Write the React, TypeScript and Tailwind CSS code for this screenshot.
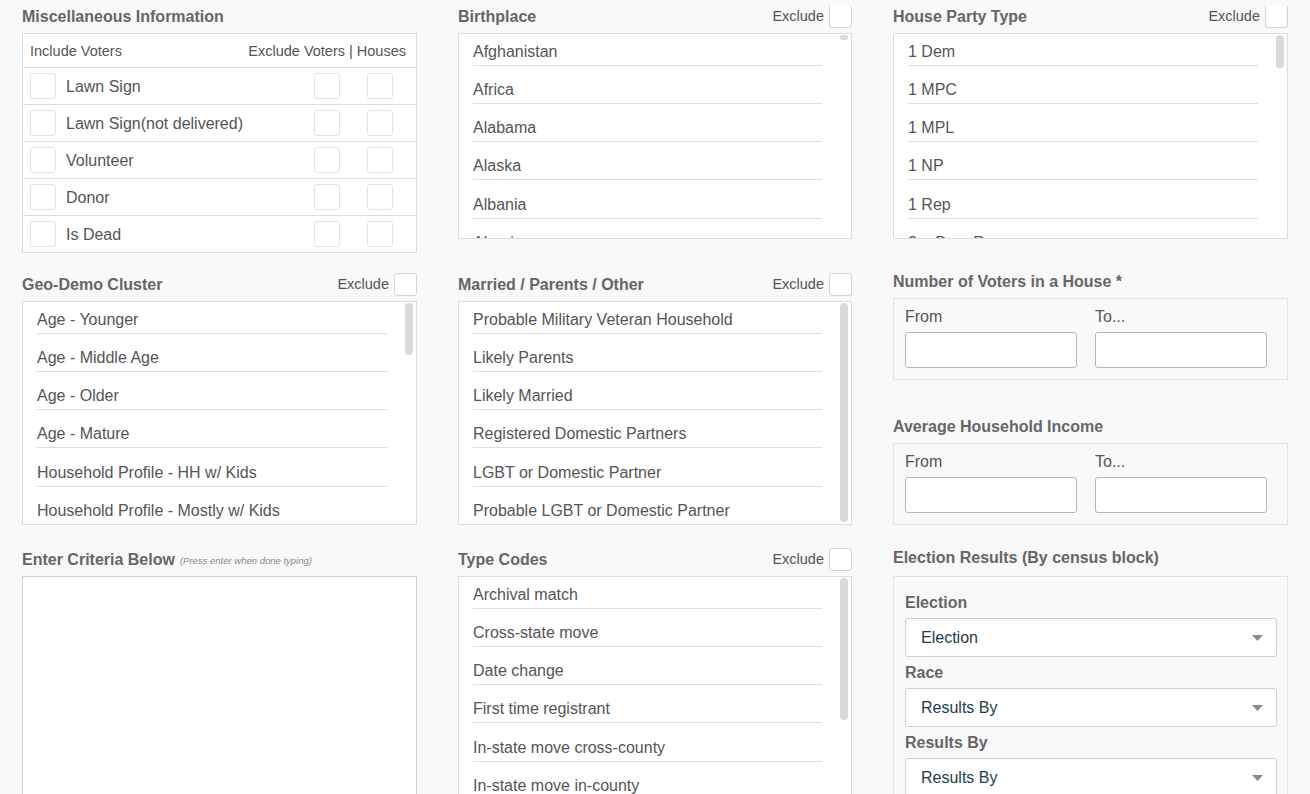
import React from 'react';

type ListProps = {
    items: string[];
    height: number;
    thumbHeight: number;
};

const font = { fontFamily: '"Liberation Sans", Arial, Helvetica, sans-serif' };

function ExcludeBox({ cut }: { cut?: boolean }) {
    return (
        <div className="flex items-center gap-[5px]">
            <span className="pt-[2px] text-[14.5px] text-[#555]">Exclude</span>
            <span
                className={
                    cut
                        ? 'block w-[23px] h-[23px] bg-white border border-[#d4d4d4] border-t-transparent rounded-[3px]'
                        : 'block w-[23px] h-[23px] bg-white border border-[#d4d4d4] rounded-[3px]'
                }
            />
        </div>
    );
}

function Header({ title, exclude, cut }: { title: string; exclude?: boolean; cut?: boolean }) {
    return (
        <div className="h-[24px] flex items-center justify-between">
            <h3 className="pt-[2px] text-[16px] font-bold text-[#666]">{title}</h3>
            {exclude && <ExcludeBox cut={cut} />}
        </div>
    );
}

function ListBox({ items, height, thumbHeight }: ListProps) {
    return (
        <div
            className="relative mt-[5px] bg-white border border-[#dcdcdc] overflow-hidden"
            style={{ height }}
        >
            <ul className="pl-[14px] pr-[29px]">
                {items.map((item, i) => (
                    <li
                        key={item}
                        className={
                            i === 0
                                ? 'pt-[7.5px] pb-[3px] text-[16px] leading-[20px] text-[#555] border-b border-[#dcdcdc] whitespace-nowrap'
                                : 'pt-[14.3px] pb-[3px] text-[16px] leading-[20px] text-[#555] border-b border-[#dcdcdc] whitespace-nowrap'
                        }
                    >
                        {item}
                    </li>
                ))}
            </ul>
            <div
                className="absolute top-[1px] right-[3px] w-[8px] rounded-full bg-[#d9d9d9]"
                style={{ height: thumbHeight }}
            />
        </div>
    );
}

const miscRows = ['Lawn Sign', 'Lawn Sign(not delivered)', 'Volunteer', 'Donor', 'Is Dead'];

function MiscInfo() {
    return (
        <div>
            <Header title="Miscellaneous Information" />
            <div className="mt-[5px] bg-white border border-[#dcdcdc]">
                <div className="h-[34px] pt-[2px] pl-[7px] pr-[10px] flex items-center justify-between text-[14.5px] text-[#555] border-b border-[#dcdcdc]">
                    <span>Include Voters</span>
                    <span>Exclude Voters | Houses</span>
                </div>
                {miscRows.map((row, i) => (
                    <div
                        key={row}
                        className={
                            i < miscRows.length - 1
                                ? 'h-[37px] pl-[7px] pr-[23px] flex items-center border-b border-[#dcdcdc]'
                                : 'h-[36px] pl-[7px] pr-[23px] flex items-center'
                        }
                    >
                        <span className="block w-[26px] h-[26px] bg-white border border-[#e2e2e2] rounded-[3px]" />
                        <span className="ml-[10px] pt-[1px] flex-1 text-[16px] text-[#555]">{row}</span>
                        <span className="block w-[26px] h-[26px] bg-white border border-[#e2e2e2] rounded-[3px]" />
                        <span className="ml-[27px] block w-[26px] h-[26px] bg-white border border-[#e2e2e2] rounded-[3px]" />
                    </div>
                ))}
            </div>
        </div>
    );
}

function RangeBox({ title, top }: { title: string; top: string }) {
    return (
        <div className={top}>
            <Header title={title} />
            <div className="mt-[5px] h-[82px] border border-[#e2e2e8] pl-[11px] pt-[8px]">
                <div className="grid grid-cols-[172px_172px] gap-x-[18px] text-[16px] leading-[20px] text-[#555]">
                    <span>From</span>
                    <span>To...</span>
                    <span className="mt-[5px] block h-[36px] bg-white border border-[#b5b5b5] rounded-[3px]" />
                    <span className="mt-[5px] block h-[36px] bg-white border border-[#b5b5b5] rounded-[3px]" />
                </div>
            </div>
        </div>
    );
}

function SelectField({ label, value }: { label: string; value: string }) {
    return (
        <div>
            <div className="text-[16px] leading-[20px] font-bold text-[#666]">{label}</div>
            <div className="mt-[5px] h-[39px] bg-white border border-[#cfcfd4] rounded-[3px] pl-[15px] pr-[13px] flex items-center justify-between">
                <span className="pt-[1px] text-[16px] text-[#1d3d4a]">{value}</span>
                <svg width="11" height="6" viewBox="0 0 11 6">
                    <path d="M0 0 L11 0 L5.5 6 Z" fill="#8a8a8a" />
                </svg>
            </div>
        </div>
    );
}

export default function App() {
    return (
        <div className="h-[794px] overflow-hidden bg-[#f9f9f9]" style={font}>
            <div className="grid grid-cols-[395px_394px_395px] gap-x-[41px] px-[22px] pt-[4px]">
                {/* column 1 */}
                <div>
                    <MiscInfo />
                    <div className="mt-[19px]">
                        <Header title="Geo-Demo Cluster" exclude />
                        <ListBox
                            height={224}
                            thumbHeight={52}
                            items={[
                                'Age - Younger',
                                'Age - Middle Age',
                                'Age - Older',
                                'Age - Mature',
                                'Household Profile - HH w/ Kids',
                                'Household Profile - Mostly w/ Kids',
                                'Household Profile - No Kids',
                            ]}
                        />
                    </div>
                    <div className="mt-[22px]">
                        <div className="h-[24px] flex items-center gap-[5px]">
                            <h3 className="pt-[2px] text-[16px] font-bold text-[#666]">Enter Criteria Below</h3>
                            <span className="pt-[4px] text-[9.5px] italic text-[#888]">
                                (Press enter when done typing)
                            </span>
                        </div>
                        <div className="mt-[5px] h-[240px] bg-white border border-[#c9d2dc]" />
                    </div>
                </div>

                {/* column 2 */}
                <div>
                    <Header title="Birthplace" exclude cut />
                    <ListBox
                        height={206}
                        thumbHeight={5}
                        items={['Afghanistan', 'Africa', 'Alabama', 'Alaska', 'Albania', 'Algeria']}
                    />
                    <div className="mt-[33px]">
                        <Header title="Married / Parents / Other" exclude />
                        <ListBox
                            height={224}
                            thumbHeight={219}
                            items={[
                                'Probable Military Veteran Household',
                                'Likely Parents',
                                'Likely Married',
                                'Registered Domestic Partners',
                                'LGBT or Domestic Partner',
                                'Probable LGBT or Domestic Partner',
                            ]}
                        />
                    </div>
                    <div className="mt-[22px]">
                        <Header title="Type Codes" exclude />
                        <ListBox
                            height={240}
                            thumbHeight={142}
                            items={[
                                'Archival match',
                                'Cross-state move',
                                'Date change',
                                'First time registrant',
                                'In-state move cross-county',
                                'In-state move in-county',
                            ]}
                        />
                    </div>
                </div>

                {/* column 3 */}
                <div>
                    <Header title="House Party Type" exclude cut />
                    <ListBox
                        height={206}
                        thumbHeight={33}
                        items={['1 Dem', '1 MPC', '1 MPL', '1 NP', '1 Rep', '2 + Dem Rep']}
                    />
                    <RangeBox title="Number of Voters in a House *" top="mt-[30px]" />
                    <RangeBox title="Average Household Income" top="mt-[34px]" />
                    <div className="mt-[20px]">
                        <Header title="Election Results (By census block)" />
                        <div className="mt-[7px] h-[240px] border border-[#e2e2e8] pt-[16px] pl-[11px] pr-[10px] flex flex-col gap-[6px]">
                            <SelectField label="Election" value="Election" />
                            <SelectField label="Race" value="Results By" />
                            <SelectField label="Results By" value="Results By" />
                        </div>
                    </div>
                </div>
            </div>
        </div>
    );
}
